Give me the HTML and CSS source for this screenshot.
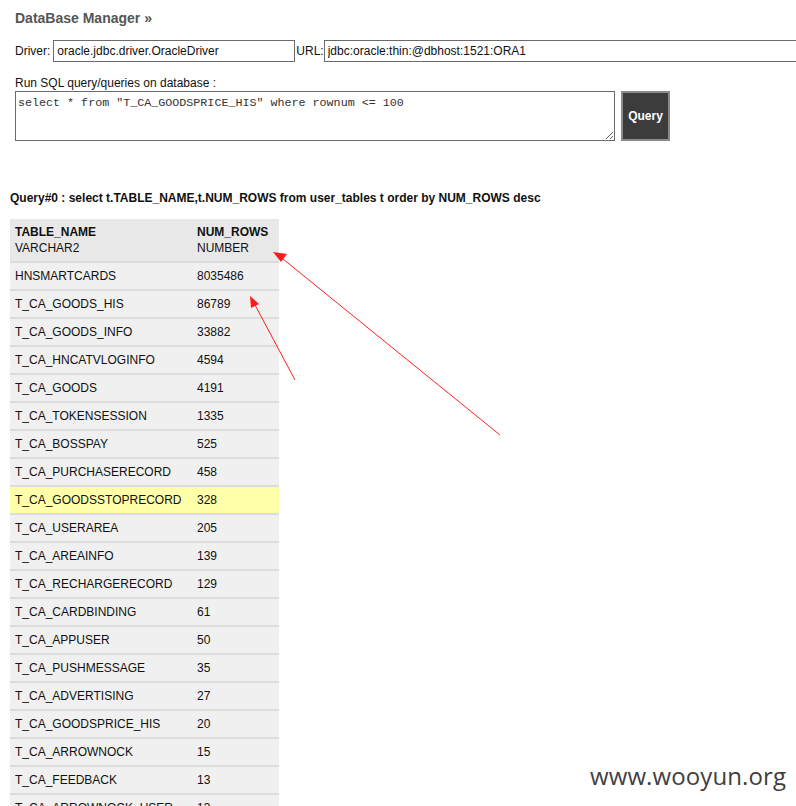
FILE: index.html
```html
<!DOCTYPE html>
<html>
<head>
<meta charset="utf-8">
<title>DataBase Manager</title>
<link rel="stylesheet" href="styles.css">
</head>
<body>
<div class="page">
  <h2 class="title">DataBase Manager »</h2>
  <div class="conn">
    <label class="lbl">Driver:</label><input class="inp drv" type="text" value="oracle.jdbc.driver.OracleDriver"><label class="lbl">URL:</label><input class="inp url" type="text" value="jdbc:oracle:thin:@dbhost:1521:ORA1">
  </div>
  <div class="runlbl">Run SQL query/queries on database :</div>
  <div class="runrow">
    <textarea class="sql">select * from "T_CA_GOODSPRICE_HIS" where rownum &lt;= 100</textarea>
    <button class="qbtn">Query</button>
  </div>
  <div class="qhead">Query#0 : select t.TABLE_NAME,t.NUM_ROWS from user_tables t order by NUM_ROWS desc</div>
  <table class="res">
    <thead>
      <tr><th><b>TABLE_NAME</b><br>VARCHAR2</th><th><b>NUM_ROWS</b><br>NUMBER</th></tr>
    </thead>
    <tbody>
      <tr><td>HNSMARTCARDS</td><td>8035486</td></tr>
      <tr><td>T_CA_GOODS_HIS</td><td>86789</td></tr>
      <tr><td>T_CA_GOODS_INFO</td><td>33882</td></tr>
      <tr><td>T_CA_HNCATVLOGINFO</td><td>4594</td></tr>
      <tr><td>T_CA_GOODS</td><td>4191</td></tr>
      <tr><td>T_CA_TOKENSESSION</td><td>1335</td></tr>
      <tr><td>T_CA_BOSSPAY</td><td>525</td></tr>
      <tr><td>T_CA_PURCHASERECORD</td><td>458</td></tr>
      <tr class="hl"><td>T_CA_GOODSSTOPRECORD</td><td>328</td></tr>
      <tr><td>T_CA_USERAREA</td><td>205</td></tr>
      <tr><td>T_CA_AREAINFO</td><td>139</td></tr>
      <tr><td>T_CA_RECHARGERECORD</td><td>129</td></tr>
      <tr><td>T_CA_CARDBINDING</td><td>61</td></tr>
      <tr><td>T_CA_APPUSER</td><td>50</td></tr>
      <tr><td>T_CA_PUSHMESSAGE</td><td>35</td></tr>
      <tr><td>T_CA_ADVERTISING</td><td>27</td></tr>
      <tr><td>T_CA_GOODSPRICE_HIS</td><td>20</td></tr>
      <tr><td>T_CA_ARROWNOCK</td><td>15</td></tr>
      <tr><td>T_CA_FEEDBACK</td><td>13</td></tr>
      <tr><td>T_CA_ARROWNOCK_USER</td><td>13</td></tr>
    </tbody>
  </table>
</div>
<svg class="arrows" width="796" height="806" viewBox="0 0 796 806">
  <line x1="500" y1="435" x2="283" y2="259" stroke="#ff2020" stroke-width="1"/>
  <polygon points="273,252 287,254 281,262" fill="#ff1a1a"/>
  <line x1="295" y1="380" x2="255" y2="305" stroke="#ff2020" stroke-width="1"/>
  <polygon points="250,296 259,304 251,308" fill="#ff1a1a"/>
</svg>
<div class="wm">www.wooyun.org</div>
</body>
</html>
```

FILE: styles.css
```css
html, body {
  margin: 0;
  padding: 0;
  background: #fff;
  overflow: hidden;
}
body {
  width: 796px;
  height: 806px;
  position: relative;
  font-family: "Liberation Sans", Arial, sans-serif;
  font-size: 12px;
  color: #111;
}
.page {
  padding: 10px 0 0 10px;
}
.title {
  margin: 0 0 0 5px;
  font-size: 14px;
  font-weight: bold;
  color: #555;
  line-height: 16px;
}
.conn {
  display: flex;
  align-items: center;
  margin: 14px 0 0 5px;
  height: 22px;
  white-space: nowrap;
}
.conn > * { flex-shrink: 0; }
.lbl {
  font-size: 12px;
  color: #111;
}
.lbl:first-child { margin-right: 3px; }
.inp {
  box-sizing: border-box;
  height: 22px;
  border: 1px solid #6b6b6b;
  padding: 0 3px;
  font-family: "Liberation Sans", Arial, sans-serif;
  font-size: 12px;
  color: #111;
  margin: 0;
  background: #fff;
}
.drv { width: 242px; margin-right: 1px; }
.url { width: 490px; margin-left: 0; }
.runlbl {
  margin: 14px 0 0 5px;
  line-height: 14px;
}
.runrow {
  display: flex;
  margin: 1px 0 0 5px;
  gap: 6px;
}
.sql {
  box-sizing: border-box;
  width: 600px;
  height: 50px;
  border: 1px solid #6b6b6b;
  padding: 4px 2px;
  margin: 0;
  resize: both;
  font-family: "Liberation Mono", "Courier New", monospace;
  font-size: 11.7px;
  color: #333;
}
.qbtn {
  box-sizing: border-box;
  width: 49px;
  height: 50px;
  background: #3c3c3c;
  border: 2px solid #8a8a8a;
  color: #fff;
  font-family: "Liberation Sans", Arial, sans-serif;
  font-weight: bold;
  font-size: 12px;
  padding: 0;
  margin: 0;
}
.qhead {
  margin: 50px 0 0 0;
  font-weight: bold;
  font-size: 12px;
  line-height: 14px;
  color: #111;
}
.res {
  margin-top: 14px;
  border-collapse: collapse;
  width: 269px;
  font-size: 12px;
}
.res th {
  background: #e8e8e8;
  text-align: left;
  font-weight: normal;
  line-height: 16px;
  padding: 5px 5px 5px 5px;
  height: 32px;
  vertical-align: middle;
  border-bottom: 2px solid #dcdcdc;
  color: #111;
}
.res th b { font-weight: bold; }
.res th:first-child, .res td:first-child { width: 172px; }
.res td {
  background: #f0f0f0;
  height: 26px;
  padding: 0 5px;
  border-bottom: 2px solid #dcdcdc;
  vertical-align: middle;
  color: #111;
}
.res tr.hl td { background: #ffffaa; }
.arrows {
  position: absolute;
  left: 0;
  top: 0;
  pointer-events: none;
}
.wm {
  position: absolute;
  left: 590px;
  top: 759px;
  font-family: "Open Sans", "Noto Sans", sans-serif;
  font-size: 24px;
  color: #3f3f3f;
  letter-spacing: 0.1px;
}
```
